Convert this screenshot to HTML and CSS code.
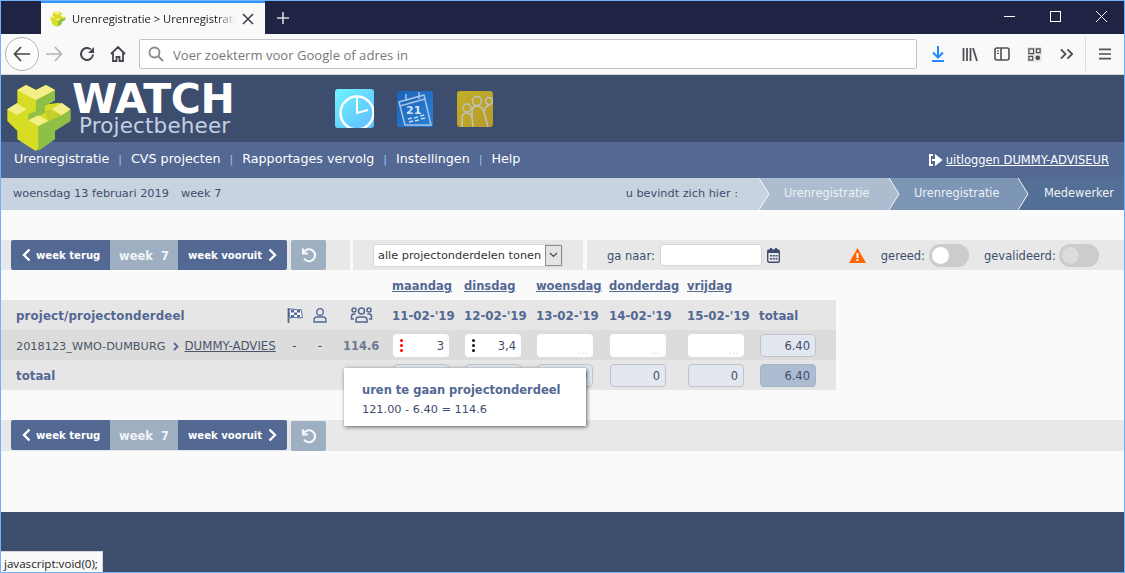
FILE: index.html
```html
<!DOCTYPE html>
<html lang="nl">
<head>
    <meta charset="UTF-8">
    <title>Urenregistratie</title>
    <link rel="stylesheet" href="styles.css">
</head>
<body>
<div class="window">
    <div class="titlebar">
        <div class="tab">
            <svg class="favicon" width="16" height="16" viewBox="20 24 194 204">
                <path d="M50 42l28-15 30 15 30-15 27 15v30l-20 13 47 15v35l-47 30v25l-50 35-55-35v-25L22 135v-35l30-18-2-10z" fill="#d7dc24"/>
                <path d="M115 150l97-50v35l-47 30v25l-50 35z" fill="#8dc044"/>
                <path d="M52 42l26-15 30 15 30-15 27 15-30 16-27 14-28-14zM22 100l28-18 30 18-30 18zM155 100l30-20 27 20-27 18zM85 133l30-15 30 17-30 15z" fill="#f3ee85"/>
            </svg>
            <span class="tab-title">Urenregistratie &gt; Urenregistratie</span>
            <svg width="12" height="12" viewBox="0 0 12 12"><path d="M1 1l10 10M11 1L1 11" stroke="#3a3a44" stroke-width="1.5"/></svg>
        </div>
        <svg class="newtab" width="14" height="14" viewBox="0 0 14 14"><path d="M7 1v12M1 7h12" stroke="#d9d9e2" stroke-width="1.6"/></svg>
        <div class="winbtns">
            <svg width="11" height="11" viewBox="0 0 11 11"><path d="M0 5.500h11" stroke="#fff"/></svg>
            <svg width="11" height="11" viewBox="0 0 11 11"><rect x=".5" y=".5" width="10" height="10" fill="none" stroke="#fff"/></svg>
            <svg width="11" height="11" viewBox="0 0 11 11"><path d="M0 0l11 11M11 0L0 11" stroke="#fff"/></svg>
        </div>
    </div>
    <div class="navbar">
        <div class="back">
            <svg width="18" height="16" viewBox="0 0 18 16"><path d="M8 1L1.500 8 8 15M2 8h15" fill="none" stroke="#45454d" stroke-width="1.700"/></svg>
        </div>
        <svg class="forward" width="17" height="16" viewBox="0 0 17 16"><path d="M9 1l6.500 7L9 15M15 8H0" fill="none" stroke="#b4b4b8" stroke-width="1.700"/></svg>
        <svg class="reload" width="16" height="16" viewBox="0 0 16 16"><path d="M14 8.500A6 6 0 1 1 11.800 3.300" fill="none" stroke="#45454d" stroke-width="2"/><path d="M15 1v6H9z" fill="#45454d"/></svg>
        <svg class="home" width="16" height="16" viewBox="0 0 16 16"><path d="M1 8l7-7 7 7M3 7v8h3.500v-4h3v4H13V7" fill="none" stroke="#45454d" stroke-width="1.800"/></svg>
        <div class="urlbar">
            <svg width="16" height="16" viewBox="0 0 16 16"><circle cx="6.500" cy="6.500" r="5" fill="none" stroke="#8a8a90" stroke-width="1.800"/><path d="M10 10l5 5" stroke="#8a8a90" stroke-width="2"/></svg>
            <span class="urltext">Voer zoekterm voor Google of adres in</span>
        </div>
        <div class="tools">
            <svg width="14" height="16" viewBox="0 0 14 16"><path d="M7 0v11M2 6.500l5 5 5-5M1 15h12" fill="none" stroke="#1f8bff" stroke-width="2"/></svg>
            <svg width="16" height="14" viewBox="0 0 16 14"><path d="M1.500 1v13M5 1v13M8.500 1v13M11 1l4 13" fill="none" stroke="#505056" stroke-width="1.800"/></svg>
            <svg class="tool-side" width="16" height="14" viewBox="0 0 16 14"><rect x="1" y="1" width="14" height="12" rx="2" fill="none" stroke="#505056" stroke-width="1.600"/><path d="M7 1v12" stroke="#505056" stroke-width="1.600"/><path d="M3 4h2M3 6.500h2" stroke="#505056"/></svg>
            <svg width="15" height="15" viewBox="0 0 16 16"><rect width="16" height="16" rx="1" fill="#e9e9e9"/><path d="M2 2h5v5H2zM10 2h4v4h-4zM2 10h4v4H2z" fill="none" stroke="#505056" stroke-width="1.300"/><circle cx="11.500" cy="11.500" r="2.500" fill="#505056"/></svg>
            <svg class="tool-more" width="13" height="12" viewBox="0 0 14 12"><path d="M1 1l5 5-5 5M8 1l5 5-5 5" fill="none" stroke="#505056" stroke-width="2"/></svg>
            <i class="tool-sep"></i>
            <svg width="12" height="12" viewBox="0 0 13 12"><path d="M0 1h13M0 6h13M0 11h13" stroke="#505056" stroke-width="1.800"/></svg>
        </div>
    </div>

    <div class="page">
        <header class="banner">
            <svg class="logo" width="80" height="76" viewBox="0 0 240 228">
                <path d="M52 42l26-15 30 15 30-15 27 15v30l-20 13 32-5 27 20v35l-47 30v25l-50 35-55-35v-25L22 135v-35l30-18z" fill="#d7dc24"/>
                <path d="M115 150l30-15 40-17 27-18v35l-47 30v25l-50 35z" fill="#8dc044"/>
                <path d="M108 72l27-14 30-16v30l-20 13-10 5v20l-27 15zM85 133v-18l23-10v-1l8 14z" fill="#8dc044"/>
                <path d="M145 135l-10-30 20-5 30 18z" fill="#c3cf2d"/>
                <path d="M52 42l26-15 30 15 30-15 27 15-30 16-27 14-28-14zM22 100l28-18 30 18-30 18zM155 100l30-20 27 20-27 18zM85 133l30-15 30 17-30 15z" fill="#f3ee85"/>
            </svg>
            <div class="brand">
                <div class="brand-name">WATCH</div>
                <div class="brand-sub">Projectbeheer</div>
            </div>
            <div class="apps">
                <div class="app app-clock"><svg width="39" height="39" viewBox="0 0 39 39"><circle cx="22" cy="24" r="16.500" fill="none" stroke="#fff" stroke-width="2.500"/><path d="M22 9v15l11-3" fill="none" stroke="#fff" stroke-width="2"/></svg></div>
                <div class="app app-cal"><svg width="36" height="36" viewBox="0 0 36 36"><path d="M2 11l25-7 7 30H8z" fill="none" stroke="#a9c4e4" stroke-width="1.500"/><path d="M3 15l25-7M9 3v7M22 1v7" stroke="#a9c4e4" stroke-width="1.500"/><text x="9" y="23" class="cal-day">21</text><path d="M11 28l4-1M17 27l4-1M23 25l4-1M12 31l4-1M18 30l4-1M24 28l4-1" stroke="#c4d8ee" stroke-width="1.500"/></svg></div>
                <div class="app app-team"><svg width="36" height="36" viewBox="0 0 36 36"><g fill="none" stroke="#bfc2c0" stroke-width="1.500"><circle cx="10" cy="17" r="4"/><path d="M5 36v-9q0-5 5-5 4 0 5 5l1 9"/><circle cx="20" cy="10" r="4.500"/><path d="M15 27v-7q0-5 5-5 5 0 7 6l4 15"/><circle cx="32" cy="10" r="3.500"/><path d="M27 20q1-5 5-5"/></g></svg></div>
            </div>
        </header>

        <nav class="mainnav">
            <a>Urenregistratie</a><i>|</i>
            <a>CVS projecten</a><i>|</i>
            <a>Rapportages vervolg</a><i>|</i>
            <a>Instellingen</a><i>|</i>
            <a>Help</a>
            <div class="logout">
                <svg width="15" height="12" viewBox="0 0 15 12"><path d="M5 1H2v10h3" fill="none" stroke="#fff" stroke-width="2"/><path d="M4 6h6M8 2l5 4-5 4z" fill="#fff" stroke="#fff" stroke-width="2"/></svg>
                <a>uitloggen DUMMY-ADVISEUR</a>
            </div>
        </nav>

        <div class="crumbs">
            <span class="today">woensdag 13 februari 2019</span>
            <span class="weeknr">week 7</span>
            <span class="here">u bevindt zich hier :</span>
            <svg class="chev" width="11" height="32" viewBox="0 0 11 32"><path d="M0 0h11v32H0z" fill="#adbccf"/><path d="M0 0l10 16L0 32z" fill="#c9d3df"/><path d="M0 0l10 16L0 32" fill="none" stroke="#f2f5f8"/></svg>
            <span class="crumb crumb-1">Urenregistratie</span>
            <svg class="chev" width="11" height="32" viewBox="0 0 11 32"><path d="M0 0h11v32H0z" fill="#7d96b5"/><path d="M0 0l10 16L0 32z" fill="#adbccf"/><path d="M0 0l10 16L0 32" fill="none" stroke="#f2f5f8"/></svg>
            <span class="crumb crumb-2">Urenregistratie</span>
            <svg class="chev" width="11" height="32" viewBox="0 0 11 32"><path d="M0 0h11v32H0z" fill="#536f95"/><path d="M0 0l10 16L0 32z" fill="#7d96b5"/><path d="M0 0l10 16L0 32" fill="none" stroke="#f2f5f8"/></svg>
            <span class="crumb crumb-3">Medewerker</span>
        </div>

        <main class="content">
            <div class="toolbar">
                <div class="seg seg-week">
                    <div class="weekbtns">
                        <a class="wbtn wbtn-back"><svg width="9" height="14" viewBox="0 0 9 14"><path d="M7.500 1.500L2 7l5.500 5.500" fill="none" stroke="#fff" stroke-width="2.400"/></svg>week terug</a>
                        <span class="wnum">week&nbsp; 7</span>
                        <a class="wbtn wbtn-next">week vooruit<svg width="9" height="14" viewBox="0 0 9 14"><path d="M1.500 1.500L7 7l-5.500 5.500" fill="none" stroke="#fff" stroke-width="2.400"/></svg></a>
                    </div>
                    <a class="undo"><svg width="16" height="16" viewBox="0 0 16 16"><path d="M2 1.500v5h5" fill="none" stroke="#f4f6f8" stroke-width="2.200"/><path d="M2.500 6A6 6 0 1 1 3 11.500" fill="none" stroke="#f4f6f8" stroke-width="2.200"/></svg></a>
                </div>
                <div class="seg seg-select">
                    <div class="select">
                        <span>alle projectonderdelen tonen</span>
                        <b><svg width="9" height="6" viewBox="0 0 9 6"><path d="M1 1l3.500 3.500L8 1" fill="none" stroke="#444" stroke-width="1.200"/></svg></b>
                    </div>
                </div>
                <div class="seg seg-rest">
                    <label class="lbl goto">ga naar:</label>
                    <div class="dateinput"></div>
                    <svg class="calicon" width="13" height="15" viewBox="0 0 13 15"><rect x=".7" y="2" width="11.600" height="12.300" rx="1.500" fill="none" stroke="#3d4d6e" stroke-width="1.400"/><path d="M1 2h11v3H1zM3 0h2v3H3zM8 0h2v3H8z" fill="#3d4d6e"/><path d="M3 7h2v1.500H3zM5.800 7h2v1.500h-2zM8.500 7h2v1.500h-2zM3 10h2v1.500H3zM5.800 10h2v1.500h-2zM8.500 10h2v1.500h-2z" fill="#3d4d6e"/></svg>
                    <svg class="warn" width="17" height="15" viewBox="0 0 17 15"><path d="M8.500 0L17 15H0z" fill="#ff6600"/><path d="M7.500 5h2v5h-2zM7.500 11h2v2h-2z" fill="#fff"/></svg>
                    <label class="lbl">gereed:</label>
                    <div class="toggle"><i></i></div>
                    <label class="lbl lbl-val">gevalideerd:</label>
                    <div class="toggle toggle-off"><i></i></div>
                </div>
            </div>

            <div class="urentabel">
                <div class="tr tr-days">
                    <span class="day">maandag</span><span class="day">dinsdag</span><span class="day">woensdag</span><span class="day">donderdag</span><span class="day">vrijdag</span>
                </div>
                <div class="tr tr-head">
                    <span class="th th-project">project/projectonderdeel</span>
                    <svg class="ico" width="16" height="15" viewBox="0 0 16 15"><path d="M1.500 0v15" stroke="#536893" stroke-width="1.800"/><path d="M2 1.500q3-1 6 0t6 0l1.500 8q-3 1-6 0T3 10z" fill="#fff" stroke="#536893"/><path d="M4 2h3v2.500H4zM10 2h3v2.500h-3zM7 4.500h3V7H7zM4 7h3v2.500H4zM10 7h3v2.500h-3z" fill="#536893"/></svg>
                    <svg class="ico" width="14" height="15" viewBox="0 0 14 15"><circle cx="7" cy="4" r="3.300" fill="none" stroke="#536893" stroke-width="1.300"/><path d="M1 14v-2q0-3 3-3h6q3 0 3 3v2z" fill="none" stroke="#536893" stroke-width="1.300"/></svg>
                    <svg class="ico ico-team" width="23" height="16" viewBox="0 0 23 16"><g fill="none" stroke="#536893" stroke-width="1.500"><circle cx="11.500" cy="4" r="3"/><path d="M6 15v-2q0-3 3-3h5q3 0 3 3v2z"/><circle cx="4" cy="3" r="2"/><circle cx="19" cy="3" r="2"/><path d="M4 12H1.500V9.500Q1.500 7 4 7h1.500M19 12h2.500V9.500Q21.500 7 19 7h-1.500"/></g></svg>
                    <span class="th">11-02-'19</span><span class="th">12-02-'19</span><span class="th">13-02-'19</span><span class="th">14-02-'19</span><span class="th">15-02-'19</span><span class="th">totaal</span>
                </div>
                <div class="tr tr-row">
                    <span class="project">2018123_WMO-DUMBURG<svg width="6" height="9" viewBox="0 0 6 9"><path d="M1 1l3.500 3.500L1 8" fill="none" stroke="#536893" stroke-width="1.800"/></svg><a>DUMMY-ADVIES</a></span>
                    <span class="dash">-</span><span class="dash">-</span>
                    <span class="togo">114.6</span>
                    <div class="cell"><i class="dots dots-red"></i>3</div>
                    <div class="cell"><i class="dots"></i>3,4</div>
                    <div class="cell cell-empty">...</div>
                    <div class="cell cell-empty">...</div>
                    <div class="cell cell-empty">...</div>
                    <div class="cell cell-sum">6.40</div>
                </div>
                <div class="tr tr-foot">
                    <span class="th th-total">totaal</span>
                    <div class="cell cell-sum">3</div>
                    <div class="cell cell-sum">3,4</div>
                    <div class="cell cell-sum">0</div>
                    <div class="cell cell-sum">0</div>
                    <div class="cell cell-sum">0</div>
                    <div class="cell cell-grand">6.40</div>
                </div>
                <div class="tooltip">
                    <h4>uren te gaan projectonderdeel</h4>
                    <p>121.00 - 6.40 = 114.6</p>
                </div>
            </div>

            <div class="toolbar toolbar-bottom">
                <div class="seg seg-week">
                    <div class="weekbtns">
                        <a class="wbtn wbtn-back"><svg width="9" height="14" viewBox="0 0 9 14"><path d="M7.500 1.500L2 7l5.500 5.500" fill="none" stroke="#fff" stroke-width="2.400"/></svg>week terug</a>
                        <span class="wnum">week&nbsp; 7</span>
                        <a class="wbtn wbtn-next">week vooruit<svg width="9" height="14" viewBox="0 0 9 14"><path d="M1.500 1.500L7 7l-5.500 5.500" fill="none" stroke="#fff" stroke-width="2.400"/></svg></a>
                    </div>
                    <a class="undo"><svg width="16" height="16" viewBox="0 0 16 16"><path d="M2 1.500v5h5" fill="none" stroke="#f4f6f8" stroke-width="2.200"/><path d="M2.500 6A6 6 0 1 1 3 11.500" fill="none" stroke="#f4f6f8" stroke-width="2.200"/></svg></a>
                </div>
            </div>
        </main>

        <footer class="pagefoot">
            <div class="status">javascript:void(0);</div>
        </footer>
    </div>
</div>
</body>
</html>
```

FILE: styles.css
```css
* {
    box-sizing: border-box;
}

html, body {
    margin: 0;
    height: 100%;
    overflow: hidden;
}

body {
    font-family: "DejaVu Sans", Verdana, sans-serif;
    font-size: 12px;
    background-color: #fafafa;
}

svg {
    display: block;
    flex: none;
}

.window {
    height: 573px;
    display: flex;
    flex-direction: column;
    border: 1px solid #6fb2f7;
}

/* browser chrome */
.titlebar {
    height: 33px;
    flex: none;
    display: flex;
    align-items: stretch;
    background-color: #1f2344;
}

.tab {
    width: 224px;
    margin-left: 40px;
    padding: 0 11px 0 9px;
    display: flex;
    align-items: center;
    background-color: #f9f9fa;
    border-top: 2px solid #2f96ff;
    font-family: "Open Sans", "Noto Sans", sans-serif;
    font-size: 11.200px;
    color: #18181f;
}

.favicon {
    margin-right: 6px;
}

.tab-title {
    flex: 1;
    overflow: hidden;
    white-space: nowrap;
    -webkit-mask-image: linear-gradient(to right, #000 88%, transparent);
    mask-image: linear-gradient(to right, #000 88%, transparent);
    margin-right: 6px;
}

.newtab {
    margin: 10px 0 0 11px;
}

.winbtns {
    margin-left: auto;
    margin-right: 17px;
    padding-bottom: 3px;
    display: flex;
    align-items: center;
    gap: 35px;
}

.navbar {
    height: 41px;
    flex: none;
    display: flex;
    align-items: center;
    padding-left: 4px;
    background-color: #f9f9fa;
    border-bottom: 1px solid #d6d6d8;
}

.back {
    width: 34px;
    height: 34px;
    display: flex;
    align-items: center;
    justify-content: center;
    border: 1px solid #b3b3b3;
    border-radius: 50%;
    background-color: #fcfcfc;
}

.forward {
    margin-left: 7px;
}

.reload {
    margin-left: 16px;
}

.home {
    margin-left: 15px;
}

.urlbar {
    width: 778px;
    height: 30px;
    margin-left: 13px;
    padding-left: 8px;
    display: flex;
    align-items: center;
    gap: 9px;
    background-color: #fff;
    border: 1px solid #c4c4c6;
    border-radius: 2px;
    font-family: "Open Sans", "Noto Sans", sans-serif;
    font-size: 13.100px;
    color: #77777d;
}

.urltext {
    margin-top: 2px;
}

.tools {
    display: flex;
    align-items: center;
    margin-left: 14px;
    gap: 17px;
}

.tool-side {
    margin-left: -1px;
}

.tool-more {
    margin-left: 1px;
}

.tool-sep {
    width: 1px;
    height: 34px;
    background-color: #dcdcde;
    margin: 0 -4px 0 -5px;
}

/* page */
.page {
    flex: 1;
    display: flex;
    flex-direction: column;
    min-height: 0;
}

.banner {
    height: 67px;
    flex: none;
    position: relative;
    display: flex;
    background-color: #3d4d6e;
}

.logo {
    position: absolute;
    left: -1px;
    top: 1px;
    z-index: 2;
}

.brand {
    width: 160px;
    margin-left: 71px;
    padding-top: 8px;
    color: #fff;
}

.brand-name {
    font-size: 41px;
    font-weight: bold;
    line-height: 32px;
    letter-spacing: -0.4px;
}

.brand-sub {
    font-size: 21.500px;
    line-height: 22px;
    margin-left: 7px;
    letter-spacing: 0.15px;
    color: #c4d0e3;
    white-space: nowrap;
}

.apps {
    display: flex;
    align-items: flex-start;
    margin-left: 103px;
    padding-top: 14px;
}

.app {
    width: 36px;
    height: 36px;
    overflow: hidden;
    border-radius: 3px;
}

.app-clock {
    width: 39px;
    height: 39px;
    background: linear-gradient(135deg, #6ff3ff, #5fbcff);
}

.app-cal {
    margin: 2px 0 0 23px;
    background: linear-gradient(135deg, #1a63b8, #2a80d8);
}

.cal-day {
    font-size: 11px;
    font-weight: bold;
    fill: #d6e4f3;
}

.app-team {
    margin: 2px 0 0 24px;
    background: linear-gradient(135deg, #c0b028, #b89a2a);
}

.mainnav {
    height: 36px;
    flex: none;
    display: flex;
    align-items: center;
    padding: 0 15px 3px 13px;
    background-color: #536893;
    color: #fff;
    font-size: 12.700px;
}

.mainnav i {
    font-style: normal;
    font-size: 11px;
    color: #9cc4ee;
    margin: 1px 9px 0;
}

.logout {
    margin-left: auto;
    margin-top: 3px;
    display: flex;
    align-items: center;
    font-size: 11.500px;
    gap: 3px;
}

.logout a {
    text-decoration: underline;
}

.crumbs {
    height: 32px;
    flex: none;
    display: flex;
    align-items: center;
    padding-left: 12px;
    background-color: #c9d3df;
    color: #3d4d6e;
    font-size: 11.300px;
}

.today,
.weeknr,
.here {
    margin-bottom: 2px;
}

.weeknr {
    margin-left: 12px;
}

.here {
    margin-left: auto;
    padding-right: 21px;
}

.crumb {
    height: 32px;
    display: flex;
    align-items: center;
    padding: 0 0 2px 14px;
    color: #eef2f6;
    font-size: 11.400px;
}

.crumb-1 {
    width: 119px;
    background-color: #adbccf;
}

.crumb-2 {
    width: 118px;
    background-color: #7d96b5;
}

.crumb-3 {
    width: 95px;
    padding-left: 15px;
    background-color: #536f95;
}

.content {
    flex: 1;
    position: relative;
    padding-top: 30px;
    background-color: #fafafa;
}

.toolbar {
    height: 30px;
    display: flex;
    gap: 3px;
}

.seg {
    display: flex;
    align-items: center;
    background-color: #e8e8e8;
}

.seg-week {
    width: 349px;
    padding-left: 10px;
    align-items: stretch;
}

.seg-select {
    width: 230px;
    padding-left: 20px;
    margin-right: 1px;
}

.seg-rest {
    flex: 1;
    color: #3d4d6e;
}

.weekbtns {
    display: flex;
    width: 276px;
    border-radius: 2px;
    overflow: hidden;
    color: #fff;
    font-weight: bold;
    font-size: 10.100px;
}

.wbtn {
    display: flex;
    align-items: center;
    gap: 5px;
    background-color: #536893;
}

.wbtn-back {
    width: 99px;
    padding-left: 11px;
}

.wbtn-next {
    width: 109px;
    padding-left: 10px;
    gap: 6px;
}

.wnum {
    width: 68px;
    display: flex;
    align-items: center;
    justify-content: center;
    padding-top: 1px;
    font-size: 11.500px;
    background-color: #9eafc2;
    color: #f2f5f8;
}

.undo {
    width: 35px;
    margin-left: 4px;
    display: flex;
    align-items: center;
    justify-content: center;
    border-radius: 2px;
    background-color: #9eafc2;
}

.select {
    width: 190px;
    height: 23px;
    display: flex;
    align-items: center;
    justify-content: space-between;
    padding-left: 4px;
    background-color: #fff;
    border: 1px solid #d8d8d8;
    border-radius: 3px;
    font-size: 11.300px;
    color: #333;
    white-space: nowrap;
}

.select span {
    margin-top: 1px;
}

.select b {
    width: 17px;
    height: 21px;
    display: flex;
    align-items: center;
    justify-content: center;
    background-color: #e4e4e4;
    border: 1px solid #8e8e8e;
}

.lbl {
    font-size: 11.500px;
    margin-top: 1px;
}

.goto {
    margin-left: 20px;
}

.dateinput {
    width: 102px;
    height: 22px;
    margin-left: 5px;
    background-color: #fff;
    border: 1px solid #d4d4d4;
    border-radius: 3px;
}

.calicon {
    margin-left: 5px;
}

.warn {
    margin: 0 15px 0 69px;
}

.toggle {
    width: 40px;
    height: 23px;
    margin-left: 4px;
    padding: 3px;
    background-color: #ccc;
    border-radius: 12px;
}

.toggle i {
    display: block;
    width: 17px;
    height: 17px;
    border-radius: 50%;
    background-color: #fff;
}

.toggle-off {
    margin-left: 3px;
}

.toggle-off i {
    background-color: #dcdcdc;
}

.lbl-val {
    margin-left: 15px;
}

/* uren tabel */
.urentabel {
    position: relative;
    width: 835px;
}

.tr {
    height: 30px;
    display: grid;
    grid-template-columns: 281px 25px 26px 59px 72px 72px 73px 78px 72px 77px;
    align-items: center;
}

.tr-days {
    grid-template-columns: 391px 72px 72px 73px 78px 72px;
}

.tr-days .day:first-child {
    grid-column: 2;
}

.day {
    font-weight: bold;
    font-size: 11.500px;
    color: #536893;
    text-decoration: underline;
    margin-top: 2px;
}

.tr-head {
    background-color: #e6e6e6;
}

.th {
    padding-top: 2px;
    font-weight: bold;
    font-size: 11.800px;
    color: #536893;
}

.th-project {
    padding-left: 15px;
    letter-spacing: 0.13px;
}

.th-total {
    padding-left: 15px;
}

.ico {
    justify-self: center;
}

.ico-team {
    margin-right: 3px;
}

.tr-row {
    background-color: #dcdcdc;
}

.project {
    display: flex;
    align-items: center;
    padding: 2px 0 0 15px;
    font-size: 11.300px;
    color: #4a5568;
    white-space: nowrap;
}

.project svg {
    margin: 0 6px 0 7px;
}

.project a {
    font-size: 11.800px;
    text-decoration: underline;
}

.dash {
    padding-top: 2px;
    text-align: center;
    color: #44506a;
}

.togo {
    padding: 2px 0 0 10px;
    font-weight: bold;
    font-size: 11.500px;
    color: #6c7a90;
}

.cell {
    width: 56px;
    height: 23px;
    margin-left: 1px;
    padding: 2px 5px 0 0;
    display: flex;
    align-items: center;
    justify-content: flex-end;
    position: relative;
    background-color: #fff;
    border-radius: 4px;
    font-size: 11.500px;
    color: #3d4d6e;
}

.cell-empty {
    color: #dbe6f2;
    align-items: flex-end;
}

.cell-sum {
    background-color: #e3e8f0;
    border: 1px solid #c0c4ca;
}

.cell-grand {
    background-color: #adbcd1;
    border: 1px solid #a5b4ca;
}

.dots {
    position: absolute;
    left: 7px;
    top: 5px;
    width: 3px;
    height: 3px;
    border-radius: 50%;
    background-color: #111;
    box-shadow: 0 5px 0 #111, 0 10px 0 #111;
}

.dots-red {
    background-color: #f00;
    box-shadow: 0 5px 0 #f00, 0 10px 0 #f00;
}

.tr-foot {
    grid-template-columns: 391px 72px 72px 73px 78px 72px 77px;
    background-color: #e6e6e6;
}

.tooltip {
    position: absolute;
    left: 343px;
    top: 98px;
    width: 242px;
    height: 58px;
    padding: 15px 18px;
    background-color: #fff;
    box-shadow: 1px 1px 4px rgba(0, 0, 0, 0.6);
}

.tooltip h4 {
    margin: 0 0 6px;
    font-size: 11.500px;
    font-weight: bold;
    color: #536893;
}

.tooltip p {
    margin: 0;
    font-size: 11.300px;
    color: #3d4d6e;
}

.toolbar-bottom {
    height: 31px;
    margin-top: 30px;
}

.toolbar-bottom .seg-week {
    width: 100%;
    padding-bottom: 1px;
}

.toolbar-bottom .undo {
    margin-bottom: -1px;
    margin-top: 1px;
}

.pagefoot {
    height: 60px;
    flex: none;
    display: flex;
    align-items: flex-end;
    background-color: #3d4d6e;
}

.status {
    width: 102px;
    height: 21px;
    padding: 4px 0 0 3px;
    background-color: #f9f9fa;
    border-top: 1px solid #d6d6d8;
    border-right: 1px solid #d6d6d8;
    font-family: "Open Sans", "Noto Sans", sans-serif;
    font-size: 11.600px;
    color: #222;
    white-space: nowrap;
    overflow: hidden;
}
```
